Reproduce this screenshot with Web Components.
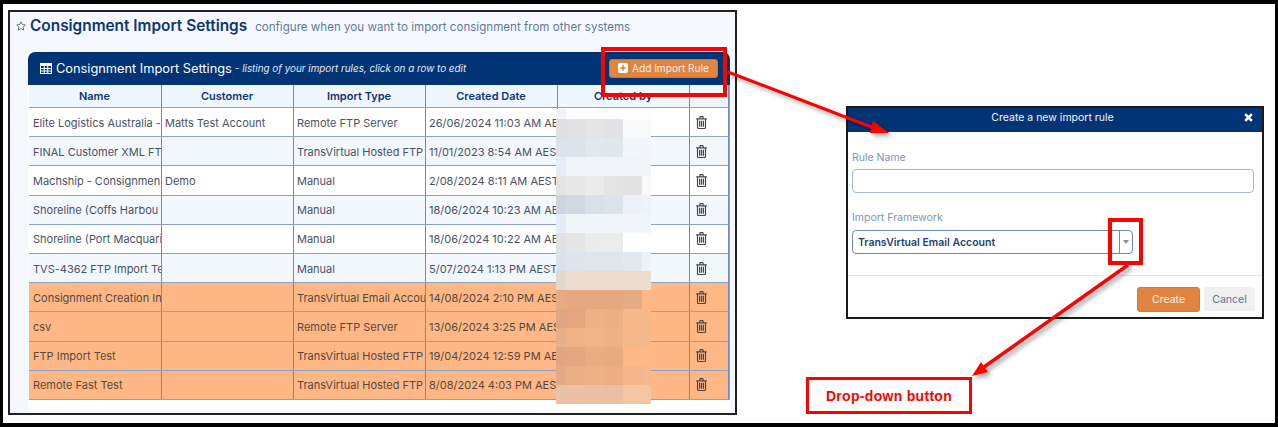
<!DOCTYPE html>
<html>
<head>
<meta charset="utf-8">
<title>Consignment Import Settings</title>
<style>
  html, body { margin: 0; padding: 0; background: #fff; }
  body { font-family: Inter, "Liberation Sans", sans-serif; }
</style>
</head>
<body>
<screen-frame>
  <settings-window title="Consignment Import Settings" note="configure when you want to import consignment from other systems">
    <rule-panel title="Consignment Import Settings" note="- listing of your import rules, click on a row to edit">
      <rule-row name="Elite Logistics Australia -" customer="Matts Test Account" type="Remote FTP Server" date="26/06/2024 11:03 AM AE"></rule-row>
      <rule-row alt name="FINAL Customer XML FT" type="TransVirtual Hosted FTP" date="11/01/2023 8:54 AM AES"></rule-row>
      <rule-row name="Machship - Consignmen" customer="Demo" type="Manual" date="2/08/2024 8:11 AM AEST"></rule-row>
      <rule-row alt name="Shoreline (Coffs Harbou" type="Manual" date="18/06/2024 10:23 AM AE"></rule-row>
      <rule-row name="Shoreline (Port Macquari" type="Manual" date="18/06/2024 10:22 AM AE"></rule-row>
      <rule-row alt name="TVS-4362 FTP Import Te" type="Manual" date="5/07/2024 1:13 PM AEST"></rule-row>
      <rule-row off name="Consignment Creation In" type="TransVirtual Email Accou" date="14/08/2024 2:10 PM AES"></rule-row>
      <rule-row off name="csv" type="Remote FTP Server" date="13/06/2024 3:25 PM AES"></rule-row>
      <rule-row off name="FTP Import Test" type="TransVirtual Hosted FTP" date="19/04/2024 12:59 PM AE"></rule-row>
      <rule-row off name="Remote Fast Test" type="TransVirtual Hosted FTP" date="8/08/2024 4:03 PM AES"></rule-row>
    </rule-panel>
  </settings-window>
  <rule-dialog></rule-dialog>
  <blur-mosaic></blur-mosaic>
  <call-outs>Drop-down button</call-outs>
</screen-frame>

<script>
// outer picture frame, black edge and the two "windows" side by side
customElements.define('screen-frame', class extends HTMLElement {
  constructor() {
    super();
    this.attachShadow({ mode: 'open' }).innerHTML = `
      <style>
        :host {
          display: flex; align-items: flex-start; position: relative; box-sizing: border-box;
          width: 1278px; height: 427px; padding: 10px 0 0 8px; overflow: hidden; background: #fff;
          box-shadow: inset 3px 4px 0 #000, inset -3px -4px 0 #000;
        }
      </style>
      <slot></slot>`;
  }
});

customElements.define('settings-window', class extends HTMLElement {
  constructor() {
    super();
    this.attachShadow({ mode: 'open' }).innerHTML = `
      <style>
        :host {
          display: flex; flex-direction: column; box-sizing: border-box; flex: none;
          width: 729px; height: 405px; border: 2px solid #222; background: #f5f9ff;
        }
        .head { display: flex; align-items: baseline; height: 40px; padding: 4px 0 0 6px; box-sizing: border-box; }
        svg { width: 10px; height: 10px; margin-right: 4px; align-self: center; margin-top: -16px; flex: none; }
        h1 { margin: 0; font-size: 15.4px; line-height: 20px; font-weight: 600; color: #0d3674; }
        span { margin-left: 8px; font-size: 11.6px; color: #5f7a9f; }
        .body { flex: 1; min-height: 0; display: flex; margin: 0 6px 0 18px; }
      </style>
      <div class="head">
        <svg viewBox="0 0 20 20"><path d="M10 1.500l2.600 5.600 6 .8-4.400 4.200 1.100 6.100-5.300-3-5.300 3 1.100-6.100L1.400 7.900l6-.8z" fill="none" stroke="#4b5563" stroke-width="1.600" stroke-linejoin="round"/></svg>
        <h1>${this.getAttribute('title')}</h1>
        <span>${this.getAttribute('note')}</span>
      </div>
      <div class="body"><slot></slot></div>`;
  }
});

customElements.define('rule-panel', class extends HTMLElement {
  constructor() {
    super();
    this.attachShadow({ mode: 'open' }).innerHTML = `
      <style>
        :host { display: block; flex: 1; background: #fff; }
        .bar {
          display: flex; align-items: center; height: 33px; box-sizing: border-box; padding: 0 12px 1px 12px;
          background: #003475; color: #fff; border-radius: 7px 7px 0 0;
        }
        .bar svg { width: 12px; height: 11px; margin-right: 4px; flex: none; }
        .bar b { font-weight: 400; font-size: 12.8px; }
        .bar i { font-size: 9.85px; margin-left: 3px; color: #e4ecf7; }
        .add {
          margin-left: auto; display: flex; align-items: center; height: 19px; width: 109px; box-sizing: border-box;
          padding-left: 8px; background: #e0843f; border: 1px solid #c9773a; border-radius: 3px; font-size: 10.1px; color: #fdf1e6;
        }
        .add svg { width: 10px; height: 10px; margin-right: 4px; }
        .cols {
          display: grid; grid-template-columns: 133px 132px 132px 132px 132px 39px; height: 23px; box-sizing: border-box;
          margin-left: 1px; background: #eef6fe; border-bottom: 1px solid #8ba3c7; border-right: 1px solid #8ba3c7;
          font-size: 11px; font-weight: 600; color: #0d3674;
        }
        .cols span { display: flex; align-items: center; justify-content: center; padding-right: 1px; border-right: 1px solid #6f8cb8; }
        .rows { margin-left: 1px; }
      </style>
      <div class="bar">
        <svg viewBox="0 0 12 11"><path fill="#fff" fill-rule="evenodd" d="M0 0h12v11H0zM1 3v2h2.800V3zm3.800 0v2h2.400V3zm3.400 0v2H11V3zM1 6v1.500h2.800V6zm3.800 0v1.500h2.400V6zm3.400 0v1.500H11V6zM1 8.500V10h2.800V8.500zm3.800 0V10h2.400V8.500zm3.400 0V10H11V8.500z"/></svg>
        <b>${this.getAttribute('title')}</b><i>${this.getAttribute('note')}</i>
        <div class="add">
          <svg viewBox="0 0 10 10"><rect width="10" height="10" rx="2" fill="#fff"/><path d="M5 2.200v5.600M2.200 5h5.600" stroke="#e0843f" stroke-width="1.700"/></svg>
          Add Import Rule
        </div>
      </div>
      <div class="cols"><span>Name</span><span>Customer</span><span>Import Type</span><span>Created Date</span><span>Created by</span><span></span></div>
      <div class="rows"><slot></slot></div>`;
  }
});

customElements.define('rule-row', class extends HTMLElement {
  constructor() {
    super();
    const a = n => this.getAttribute(n) || '';
    this.attachShadow({ mode: 'open' }).innerHTML = `
      <style>
        :host {
          display: grid; grid-template-columns: 133px 132px 132px 132px 132px 39px; height: 29.2px; box-sizing: border-box;
          background: #fff; border-bottom: 1px solid #8ba3c7; border-right: 1px solid #8ba3c7;
          font-size: 11px; color: #4a5263;
        }
        :host([alt]) { background: #f3f8fe; }
        :host([off]) { background: #ffb885; color: #54483f; }
        div {
          display: flex; align-items: center; padding: 1px 0 0 3px; overflow: hidden; white-space: nowrap;
          border-right: 1px solid #6f8cb8; min-width: 0;
        }
        div.first { padding-left: 4px; }
        div.bin { padding: 0 0 0 6px; }
        svg { width: 11px; height: 13px; flex: none; }
      </style>
      <div class="first">${a('name')}</div><div>${a('customer')}</div><div>${a('type')}</div><div>${a('date')}</div><div></div>
      <div class="bin">
        <svg viewBox="0 0 11 13" fill="none" stroke="#45454e" stroke-width="1.150">
          <path d="M.2 2.800h10.600M3.600 2.600l.6-2h2.600l.6 2M1.500 3v8.300q0 1.200 1.200 1.200h5.600q1.200 0 1.200-1.200V3"/>
          <path d="M3.600 4.800v5.900M5.500 4.800v5.900M7.400 4.800v5.900" stroke-width="1.200"/>
        </svg>
      </div>`;
  }
});

customElements.define('rule-dialog', class extends HTMLElement {
  constructor() {
    super();
    this.attachShadow({ mode: 'open' }).innerHTML = `
      <style>
        :host {
          display: flex; flex-direction: column; box-sizing: border-box; flex: none;
          width: 418px; height: 213px; margin: 96px 0 0 109px; border: 2px solid #1a1a1a; background: #fff;
          font-size: 10.500px;
        }
        header {
          display: flex; align-items: center; justify-content: center; position: relative; height: 24px; flex: none;
          background: #003475; color: #f2f6fb; padding: 0 5px 6px 0; box-sizing: border-box;
        }
        header svg { position: absolute; right: 9px; top: 5px; width: 9px; height: 9px; }
        .form { flex: 1; padding: 19px 8px 0 4px; color: #7b95bd; }
        label { display: block; line-height: 13px; }
        .name { height: 24px; box-sizing: border-box; margin: 5px 0 18px; border: 1px solid #a4b8d5; border-radius: 4px; }
        .pick {
          display: flex; align-items: center; justify-content: space-between; width: 281px; height: 24px; box-sizing: border-box; margin-top: 6px;
          border: 1px solid #6d8ab5; border-radius: 4px; color: #1f3f77; font-weight: 600; padding-left: 5px;
        }
        .drop { width: 12px; height: 100%; display: flex; align-items: center; justify-content: center; border-left: 1px solid #6d8ab5; }
        .drop::after { content: ""; border: 3px solid transparent; border-top: 4px solid #8a8f98; border-bottom: 0; }
        footer {
          display: flex; justify-content: flex-end; gap: 4px; height: 42px; box-sizing: border-box; flex: none;
          padding: 11px 7px 0 0; border-top: 1px solid #e6e8ea;
        }
        button { font: inherit; height: 25px; border-radius: 3px; padding: 0; }
        .create { width: 63px; background: #e0843f; border: 1px solid #d27b3b; color: #fdf1e6; }
        .cancel { width: 51px; height: 24px; background: #f0f0f1; border: 0; color: #5d7396; }
      </style>
      <header>Create a new import rule
        <svg viewBox="0 0 9 9"><path d="M1.200 1.200l6.600 6.600M7.800 1.200L1.200 7.800" stroke="#fff" stroke-width="2.600"/></svg>
      </header>
      <div class="form">
        <label>Rule Name</label>
        <div class="name"></div>
        <label>Import Framework</label>
        <div class="pick">TransVirtual Email Account<span class="drop"></span></div>
      </div>
      <footer><button class="create">Create</button><button class="cancel">Cancel</button></footer>`;
  }
});

// pixelated block hiding the "Created by" names
const MOSAIC = [
  '#f0f3f9 #fdfdfe #fcfdfe #fcfdfe #fdfdfe #fdfdfe',
  '#e0e0e2 #e0e1e3 #e5e5e6 #e2e2e4 #f9fafb #f9fafb',
  '#dce3ea #dde3e9 #e3e8ed #e2e7eb #f1f6fb #f2f6fb',
  '#e6edf6 #f0f4f9 #f0f4f9 #f0f4f9 #f0f4f9 #f1f4f9',
  '#e3e3e4 #e7e7e7 #ebebeb #e5e4e4 #e2e2e2 #f9f9fb',
  '#ced5e0 #d3d9e3 #dbe0e8 #dde3ea #ecf1f8 #eef2f9',
  '#e6edf6 #f1f4f9 #f2f5f9 #f1f4f8 #f1f4f9 #f1f4f9',
  '#dfe1e2 #e5e5e6 #ebebeb #ebeceb #ffffff #ffffff',
  '#dae2ea #dde4eb #dee5ec #dfe6eb #e2e8f0 #ecf2fa',
  '#e3d8cd #ecdccf #ecdccf #ecdccf #eddcd0 #eddcd0',
  '#e6ab80 #e6a97f #e5a87f #e6a97f #e7ab83 #ffb885',
  '#dfa684 #e6a580 #edb187 #ebae86 #f6b789 #f6b789',
  '#e5b08a #efb286 #f0b288 #eeb086 #f6b78a #f6b78a',
  '#dfa680 #e3a67f #eaac82 #e9ab82 #ffb885 #ffb885',
  '#e3aa85 #ecae84 #eeb086 #edae84 #f5b58a #f5b88c',
  '#e6c2a8 #eac1a6 #ecc0a3 #ebbfa2 #f5c5a3 #f5c5a3'
];

customElements.define('blur-mosaic', class extends HTMLElement {
  constructor() {
    super();
    const cells = MOSAIC.map(r => r.split(' ').map(c => `<i style="background:${c}"></i>`).join('')).join('');
    this.attachShadow({ mode: 'open' }).innerHTML = `
      <style>
        :host {
          position: absolute; left: 556px; top: 109px; display: grid;
          grid-template-columns: 10px 19px 19px 19px 19px 9px;
          grid-template-rows: 10px repeat(15, 19px);
        }
      </style>${cells}`;
  }
});

// red annotation boxes, arrows and the caption on top of everything
customElements.define('call-outs', class extends HTMLElement {
  constructor() {
    super();
    this.attachShadow({ mode: 'open' }).innerHTML = `
      <style>
        :host { position: absolute; inset: 0; display: block; pointer-events: none; }
        svg { position: absolute; left: 0; top: 0; width: 1278px; height: 427px; }
        .arrows { filter: drop-shadow(3px 3px 2px rgba(0,0,0,.35)); }
        .cap {
          position: absolute; left: 806px; top: 377px; width: 166px; height: 37px; box-sizing: border-box;
          display: flex; align-items: center; justify-content: center; border: 3px solid #f00; background: #fff;
          font: bold 14px "Liberation Sans", Arial, sans-serif; letter-spacing: .3px; color: #f00;
        }
      </style>
      <svg viewBox="0 0 1278 427">
        <g class="arrows">
          <path d="M728 72L874 128" stroke="#f00" stroke-width="3" fill="none"/>
          <path d="M889 133L873 121L870 133Z" fill="#f00"/>
          <path d="M1128 265L984 367" stroke="#f00" stroke-width="3.500" fill="none"/>
          <path d="M972 376L981 362L988 372Z" fill="#f00"/>
        </g>
        <rect x="603" y="49" width="122" height="46" fill="none" stroke="#f00" stroke-width="4"/>
        <rect x="1110" y="220" width="31" height="43" fill="none" stroke="#f00" stroke-width="4"/>
      </svg>
      <div class="cap"><slot></slot></div>`;
  }
});
</script>
</body>
</html>
